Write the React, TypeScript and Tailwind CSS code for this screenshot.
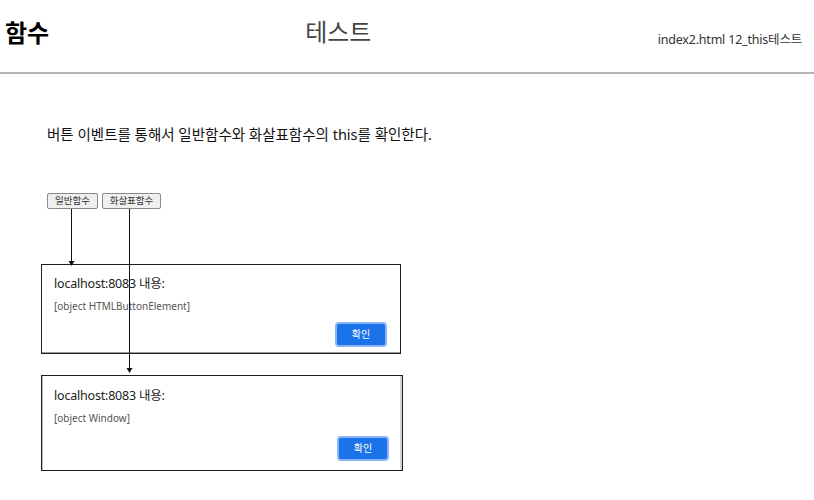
import React from "react";

const font = { fontFamily: '"Noto Sans", "Noto Sans CJK KR", sans-serif' };

function Dialog({ message, extra }: { message: string; extra?: boolean }) {
  return (
    <div
      className={
        "ml-[41px] border border-[#1e1e1e] bg-white pl-[12px] pr-[13px] " +
        (extra ? "w-[362px] h-[96px] pt-[11px] shadow-[inset_-2px_0_0_#d4d4d4,inset_1px_0_0_#bdbdbd]" : "w-[360px] h-[90px] pt-[10px] shadow-[inset_0_-1px_0_#9a9a9a]")
      }
    >
      <div className="text-[12.5px] leading-[18px] text-[#222] tracking-[-0.2px]">localhost:8083 내용:</div>
      <div className="mt-[6px] text-[10px] leading-[14px] text-[#555]">{message}</div>
      <div className={"flex justify-end " + (extra ? "mt-[11px]" : "mt-[9px]")}>
        <div className="flex h-[25px] w-[52px] items-center justify-center rounded-[4px] border-2 border-[#8ab4f8] bg-[#1a73e8] text-[10px] text-white">
          확인
        </div>
      </div>
    </div>
  );
}

export default function App() {
  return (
    <div className="relative h-[500px] w-[814px] overflow-hidden bg-white" style={font}>
      <header className="flex h-[74px] items-start border-b-2 border-[#b4b4b4]">
        <div className="ml-[5px] mt-[17px] text-[24px] font-bold leading-[32px] text-black">함수</div>
        <div className="ml-[256px] mt-[16px] text-[24px] leading-[32px] text-[#444]">테스트</div>
        <div className="ml-auto mr-[12px] mt-[31px] text-[12.5px] leading-[18px] text-[#333] tracking-[-0.2px]">
          index2.html 12_this테스트
        </div>
      </header>

      <p className="ml-[47px] mt-[50px] text-[14.5px] leading-[20px] text-[#111]">
        버튼 이벤트를 통해서 일반함수와 화살표함수의 this를 확인한다.
      </p>

      <div className="ml-[47px] mt-[49px] flex gap-[4px]">
        <div className="flex h-[16px] w-[51px] items-center justify-center rounded-[2px] border border-[#8a8a8a] bg-[#efefef] text-[9.5px] text-[#333]">
          일반함수
        </div>
        <div className="flex h-[16px] w-[59px] items-center justify-center rounded-[2px] border border-[#8a8a8a] bg-[#efefef] text-[9.5px] text-[#333]">
          화살표함수
        </div>
      </div>

      <div className="mt-[55px]">
        <Dialog message="[object HTMLButtonElement]" />
      </div>
      <div className="mt-[21px]">
        <Dialog message="[object Window]" extra />
      </div>

      <svg className="pointer-events-none absolute left-0 top-0" width="814" height="500">
        <line x1="71.5" y1="209" x2="71.5" y2="262" stroke="#111" strokeWidth="1" />
        <polygon points="68.5,261 74.5,261 71.5,266" fill="#111" />
        <line x1="129.5" y1="209" x2="129.5" y2="369" stroke="#111" strokeWidth="1" />
        <polygon points="126.5,368 132.5,368 129.5,373" fill="#111" />
      </svg>
    </div>
  );
}
